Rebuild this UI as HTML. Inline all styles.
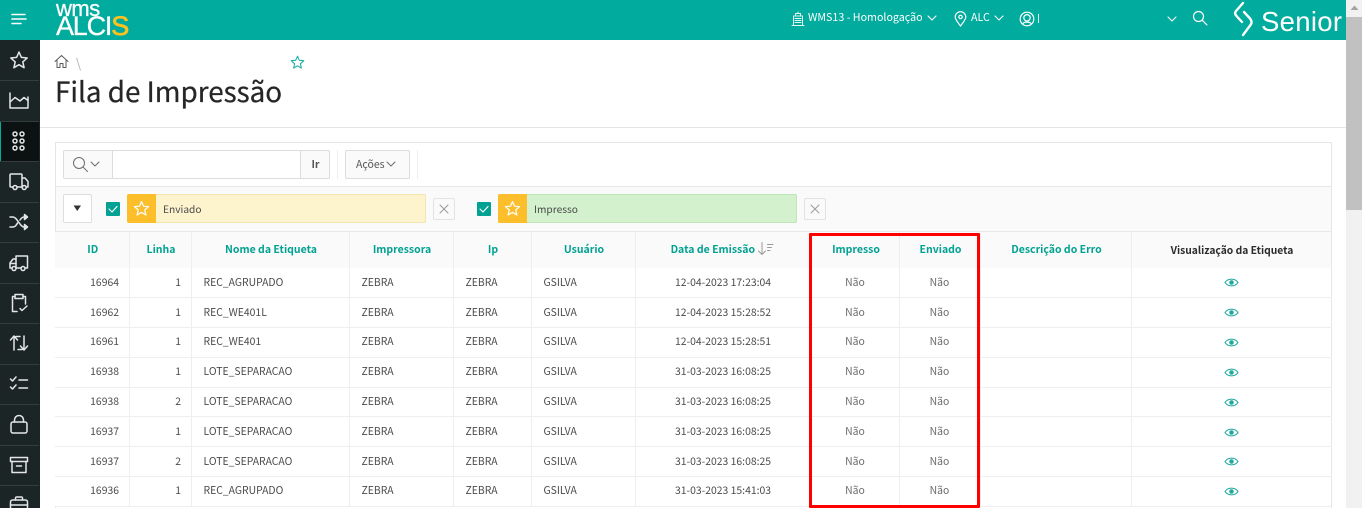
<!DOCTYPE html>
<html lang="pt"><head><meta charset="utf-8"><title>Fila de Impressão</title>
<style>
*{box-sizing:border-box}
html,body{margin:0;padding:0;width:1362px;height:508px;overflow:hidden;background:#fff}
body{position:relative;font-family:"Noto Sans CJK SC","Liberation Sans",sans-serif;font-size:11px;color:#404040}
.a{position:absolute}
svg{position:absolute;display:block;fill:none;stroke-linecap:round;stroke-linejoin:round}
#top{left:0;top:0;width:1346px;height:40px;background:#01ab9d;overflow:hidden}
#top span.t{position:absolute;color:#fff;font-size:10.7px;line-height:16px;top:10px;white-space:nowrap}
#side{left:0;top:40px;width:40px;height:468px;background:#1c2526}
.sep{position:absolute;left:0;width:39px;height:1px;background:#343c3d}
#side svg{stroke:#e3e6e6;stroke-width:1.5}
#sb{left:1346px;top:0;width:16px;height:508px;background:#f1f1f1}
#panel{left:55px;top:142px;width:1277px;height:380px;border:1px solid #e6e6e6;background:#fff}
table{position:absolute;left:55px;top:232px;border-collapse:collapse;table-layout:fixed;width:1276px}
th,td{padding:0 11px;border-right:1px solid #eeeeee;border-bottom:1px solid #eeeeee;white-space:nowrap;overflow:hidden}
th:last-child,td:last-child{border-right:1px solid #e6e6e6}
th{height:36px;background:#fafafa;color:#01a193;font-size:10.5px;font-weight:700;text-align:center;border-bottom:0;line-height:14px;padding:0 10px 0 12px}
td{height:29.8px;font-size:10.4px;line-height:14px;color:#4a4a4a;background:#fff;padding:0 11px 2px 12px}
td.r{text-align:right;padding-right:9.500px}
td.c{text-align:center;padding:0 11px 2px 11px}
td.n{text-align:center;color:#6a6a6a;padding:0 11px 2px 11px}
td svg{position:static;display:inline-block;vertical-align:middle}
</style></head><body>

<div class="a" id="top">
  <svg style="left:11px;top:13px" width="16" height="12" stroke="#fff" stroke-width="1.6"><path d="M1 1.500H14M1 6H15M1 10.500H10"/></svg>
  <span class="a" style="left:56px;top:0;color:#fff;font:400 22px/18px 'Liberation Sans',sans-serif;letter-spacing:-.5px;-webkit-text-stroke:.3px #fff">wms</span>
  <span class="a" style="left:56px;top:12px;color:#fff;font:400 27px/28px 'Liberation Sans',sans-serif;letter-spacing:-1.200px;-webkit-text-stroke:.3px #fff">ALCI<span style="color:#fcc11e;-webkit-text-stroke:.7px #fcc11e">S</span></span>

  <svg style="left:791px;top:11px" width="14" height="15" stroke="#e4f6f4" stroke-width="1"><path d="M1 14.500H13M2.500 14V5H11.500V14M4.500 5V2.500H9.500V5M7 1V2.500M4 7.500H10M4 9.500H10M4 11.500H10"/></svg>
  <span class="t" style="left:808px">WMS13 - Homologação</span>
  <svg style="left:927px;top:15px" width="10" height="7" stroke="#fff" stroke-width="1.100"><path d="M1 1L5 5L9 1"/></svg>
  <svg style="left:954px;top:11px" width="13" height="16" stroke="#fff" stroke-width="1.200"><path d="M6.500 15C3.500 11 1.200 8.500 1.200 6A5.300 5.300 0 0 1 11.800 6C11.800 8.500 9.500 11 6.500 15Z"/><circle cx="6.500" cy="6" r="1.700"/></svg>
  <span class="t" style="left:971px">ALC</span>
  <svg style="left:994px;top:15px" width="10" height="7" stroke="#fff" stroke-width="1.100"><path d="M1 1L5 5L9 1"/></svg>
  <svg style="left:1019px;top:11px" width="16" height="16" stroke="#fff" stroke-width="1.200"><circle cx="8" cy="8" r="6.800"/><circle cx="8" cy="6.800" r="3.200"/><path d="M3.500 13C5 10.500 11 10.500 12.500 13"/></svg>
  <div class="a" style="left:1038px;top:14px;width:1px;height:9px;background:#d8f3f0"></div>
  <svg style="left:1167px;top:16px" width="10" height="7" stroke="#fff" stroke-width="1.100"><path d="M1 1L5 5L9 1"/></svg>
  <svg style="left:1192px;top:10px" width="16" height="16" stroke="#fff" stroke-width="1.200"><circle cx="6.500" cy="6.500" r="5"/><path d="M10.200 10.200L15 15"/></svg>
  <svg style="left:1233px;top:1px" width="22" height="37" stroke="#fff" stroke-width="2.400"><path d="M10 2L3 10C1.500 12 2 13.500 3.500 15L9 21"/><path d="M11 11L17 17.500C19 20 19 22 17.500 24L10 34"/></svg>
  <span class="a" style="left:1261px;top:5px;color:#fff;font:400 27.500px/34px 'Liberation Sans',sans-serif;letter-spacing:.3px">Senior</span>
</div>

<div class="a" id="side">
  <div class="a" style="left:0;top:81px;width:39px;height:40px;background:#0c1212"></div>
  <div class="a" style="left:0;top:81px;width:1px;height:40px;background:#01ab9d"></div>
  <div class="sep" style="top:40px"></div><div class="sep" style="top:81px"></div><div class="sep" style="top:121px"></div><div class="sep" style="top:162px"></div><div class="sep" style="top:202px"></div><div class="sep" style="top:243px"></div><div class="sep" style="top:283px"></div><div class="sep" style="top:324px"></div><div class="sep" style="top:364px"></div><div class="sep" style="top:405px"></div><div class="sep" style="top:445px"></div>
  <svg style="left:9px;top:10px" width="20" height="20"><path d="M10 2L12.400 7.400L18.200 8L13.800 11.900L15.100 17.700L10 14.700L4.900 17.700L6.200 11.900L1.800 8L7.600 7.400Z"/></svg>
  <svg style="left:9px;top:52px" width="20" height="18"><path d="M1 1V16H19V5"/><path d="M1 10L6 5.500L11 9L15 5.500L19 8.500"/></svg>
  <svg style="left:11px;top:91px" width="16" height="20" stroke-width="1.300"><circle cx="4" cy="3" r="2"/><circle cx="11" cy="3" r="2"/><circle cx="4" cy="10" r="2"/><circle cx="11" cy="10" r="2"/><circle cx="4" cy="17" r="2"/><circle cx="11" cy="17" r="2"/></svg>
  <svg style="left:9px;top:133px" width="20" height="18"><path d="M4 14H2C1.400 14 1 13.600 1 13V2C1 1.400 1.400 1 2 1H12C12.600 1 13 1.400 13 2V14H8"/><path d="M13 5H16L19 8.500V14H17"/><path d="M13 14H13.500"/><circle cx="6" cy="14.500" r="2"/><circle cx="15.200" cy="14.500" r="2"/></svg>
  <svg style="left:9px;top:173px" width="20" height="18"><path d="M1 4H4C8 4 11 14 15 14H18M1 14H4C6 14 7.500 12 8.500 10M11 7C12 5.500 13.300 4 15 4H18"/><path d="M15.500 1.500L18.500 4L15.500 6.500Z"/><path d="M15.500 11.500L18.500 14L15.500 16.500Z"/></svg>
  <svg style="left:9px;top:214px" width="20" height="18"><path d="M16 14H18.500V2H7V5H4L1 9V14H3"/><path d="M7 5V14H12"/><path d="M1.500 9.500H7"/><circle cx="5" cy="14.500" r="2"/><circle cx="14" cy="14.500" r="2"/></svg>
  <svg style="left:11px;top:253px" width="18" height="20"><path d="M4 3.500H1.500V18.500H6"/><path d="M12 3.500H14.500V11"/><path d="M4 1.500H12V5.500H4Z"/><path d="M9 15.500L11 17.500L16 13"/></svg>
  <svg style="left:9px;top:294px" width="20" height="18"><path d="M5 16V5C5 3.500 6 2.500 7.500 2.500H11"/><path d="M1.500 6L5 2L8.500 6"/><path d="M15 2V13C15 14.500 14 15.500 12.500 15.500H9"/><path d="M11.500 12L15 16L18.500 12"/></svg>
  <svg style="left:9px;top:335px" width="20" height="18"><path d="M1.500 4L3.500 6L7 2M1.500 12L3.500 14L7 10M10 5H18.500M10 13H18.500"/></svg>
  <svg style="left:9px;top:374px" width="20" height="20"><rect x="2" y="8" width="16" height="11" rx="2"/><path d="M5.500 8V6A4.500 4.500 0 0 1 14.500 6V8"/></svg>
  <svg style="left:9px;top:416px" width="20" height="18"><rect x="1.500" y="1.500" width="17" height="4"/><path d="M3 5.500V16.500H17V5.500M7.500 10H12.500"/></svg>
  <svg style="left:9px;top:456px" width="20" height="14"><rect x="1.500" y="4" width="17" height="12" rx="2"/><path d="M6.500 4V2C6.500 1.500 7 1 7.500 1H12.500C13 1 13.500 1.500 13.500 2V4M1.500 9H18.500"/></svg>
</div>

<div class="a" id="sb">
  <div class="a" style="left:0;top:17px;width:16px;height:193px;background:#c1c1c1"></div>
  <svg style="left:4px;top:5px" width="9" height="6"><path d="M4.500 0.500L8.500 5H0.500Z" fill="#a3a3a3"/></svg>
</div>

<svg style="left:54px;top:54px" width="16" height="15" stroke="#5a5a5a" stroke-width="1"><path d="M1 7.500L7.500 1.500L14 7.500M3 6.500V13.500H6V9.500H9V13.500H12V6.500"/></svg>
<div class="a" style="left:76px;top:55px;color:#b0b0b0;font-size:13px;line-height:16px">\</div>
<svg style="left:290px;top:55px" width="15" height="15" stroke="#1fb1a5" stroke-width="1.100"><path d="M7.500 1.200L9.300 5.300L13.800 5.700L10.400 8.700L11.400 13.100L7.500 10.800L3.600 13.100L4.600 8.700L1.200 5.700L5.700 5.300Z"/></svg>
<div class="a" style="left:55px;top:73px;font-size:27.800px;line-height:36px;color:#262626;white-space:nowrap;-webkit-text-stroke:.25px #262626">Fila de Impressão</div>
<div class="a" style="left:40px;top:127px;width:1306px;height:1px;background:#e4e4e4"></div>

<div class="a" id="panel"></div>
<div class="a" style="left:56px;top:186px;width:1275px;height:46px;background:#fafafa;border-top:1px solid #e8e8e8;border-bottom:1px solid #e8e8e8"></div>

<div class="a" style="left:63px;top:150px;width:267px;height:29px;border:1px solid #dcdcdc;border-radius:2px;background:#fafafa"></div>
<div class="a" style="left:112px;top:150px;width:189px;height:29px;border:1px solid #dcdcdc;background:#fff"></div>
<svg style="left:72px;top:156px" width="17" height="17" stroke="#6c6c6c" stroke-width="1"><circle cx="7" cy="7" r="5.500"/><path d="M11 11L15.500 15.500"/></svg>
<svg style="left:90px;top:161px" width="10" height="6" stroke="#6c6c6c" stroke-width="1"><path d="M1 1L5 5L9 1"/></svg>
<div class="a" style="left:301px;top:157px;width:29px;text-align:center;font-size:10.500px;font-weight:700;line-height:15px;color:#555">Ir</div>
<div class="a" style="left:337px;top:150px;width:1px;height:29px;background:#eeeeee"></div>
<div class="a" style="left:345px;top:150px;width:65px;height:29px;border:1px solid #dcdcdc;border-radius:2px;background:#fafafa"></div>
<div class="a" style="left:356px;top:157px;font-size:10.500px;line-height:15px;color:#555">Ações</div>
<svg style="left:386px;top:161px" width="11" height="6" stroke="#6c6c6c" stroke-width="1"><path d="M1 1L5 5L9 1"/></svg>
<div class="a" style="left:417px;top:150px;width:1px;height:29px;background:#eeeeee"></div>

<div class="a" style="left:63px;top:194px;width:29px;height:29px;border:1px solid #dedede;border-radius:2px;background:#fff"></div>
<svg style="left:73px;top:205px" width="9" height="7"><path d="M0.500 0.500H8L4.250 6Z" fill="#333"/></svg>

<div class="a" style="left:106px;top:202px;width:14px;height:14px;background:#01a193;border-radius:1px"></div>
<svg style="left:106px;top:202px" width="14" height="14" stroke="#fff" stroke-width="1.200"><path d="M3 7L6 10L11 4.500"/></svg>
<div class="a" style="left:127px;top:194px;width:299px;height:29px;background:#fdf3cd;border:1px solid #f2e5b0;border-radius:2px"></div>
<div class="a" style="left:127px;top:194px;width:29px;height:29px;background:#fdbe2c;border-radius:2px 0 0 2px"></div>
<svg style="left:133px;top:200px" width="17" height="17" stroke="#fff" stroke-width="1.200"><path d="M8.500 1.500L10.500 6.200L15.600 6.600L11.700 10L12.900 15L8.500 12.400L4.100 15L5.300 10L1.400 6.600L6.500 6.200Z"/></svg>
<div class="a" style="left:163px;top:201px;font-size:10.200px;line-height:15px;color:#4a4a4a">Enviado</div>
<div class="a" style="left:433px;top:198px;width:22px;height:22px;border:1px solid #e2e2e2;border-radius:2px;background:#fafafa"></div>
<svg style="left:439px;top:204px" width="10" height="10" stroke="#9a9a9a" stroke-width="1"><path d="M1 1L9 9M9 1L1 9"/></svg>

<div class="a" style="left:477px;top:202px;width:14px;height:14px;background:#01a193;border-radius:1px"></div>
<svg style="left:477px;top:202px" width="14" height="14" stroke="#fff" stroke-width="1.200"><path d="M3 7L6 10L11 4.500"/></svg>
<div class="a" style="left:498px;top:194px;width:299px;height:29px;background:#d2f1cc;border:1px solid #bfe5b8;border-radius:2px"></div>
<div class="a" style="left:498px;top:194px;width:29px;height:29px;background:#fdbe2c;border-radius:2px 0 0 2px"></div>
<svg style="left:504px;top:200px" width="17" height="17" stroke="#fff" stroke-width="1.200"><path d="M8.500 1.500L10.500 6.200L15.600 6.600L11.700 10L12.900 15L8.500 12.400L4.100 15L5.300 10L1.400 6.600L6.500 6.200Z"/></svg>
<div class="a" style="left:534px;top:201px;font-size:10.200px;line-height:15px;color:#4a4a4a">Impresso</div>
<div class="a" style="left:804px;top:198px;width:22px;height:22px;border:1px solid #e2e2e2;border-radius:2px;background:#fafafa"></div>
<svg style="left:810px;top:204px" width="10" height="10" stroke="#9a9a9a" stroke-width="1"><path d="M1 1L9 9M9 1L1 9"/></svg>

<table>
<colgroup><col style="width:74px"><col style="width:62px"><col style="width:158px"><col style="width:104px"><col style="width:78px"><col style="width:104px"><col style="width:176px"><col style="width:88px"><col style="width:81px"><col style="width:151px"><col style="width:200px"></colgroup>
<tr><th>ID</th><th>Linha</th><th>Nome da Etiqueta</th><th>Impressora</th><th>Ip</th><th>Usuário</th><th>Data de Emissão <span style="display:inline-block;width:20px"></span></th><th>Impresso</th><th>Enviado</th><th>Descrição do Erro</th><th style="color:#2b2b2b;font-size:10.300px">Visualização da Etiqueta</th></tr>
<tr><td class="r">16964</td><td class="r">1</td><td>REC_AGRUPADO</td><td>ZEBRA</td><td>ZEBRA</td><td>GSILVA</td><td class="c">12-04-2023 17:23:04</td><td class="n">Não</td><td class="n">Não</td><td></td><td class="c"><svg width="15" height="11" stroke="#1fa99d" stroke-width="1.100"><path d="M1 5.500C4 1 11 1 14 5.500C11 10 4 10 1 5.500Z"/><circle cx="7.500" cy="5.500" r="1.700" fill="#1fa99d"/></svg></td></tr>
<tr><td class="r">16962</td><td class="r">1</td><td>REC_WE401L</td><td>ZEBRA</td><td>ZEBRA</td><td>GSILVA</td><td class="c">12-04-2023 15:28:52</td><td class="n">Não</td><td class="n">Não</td><td></td><td class="c"><svg width="15" height="11" stroke="#1fa99d" stroke-width="1.100"><path d="M1 5.500C4 1 11 1 14 5.500C11 10 4 10 1 5.500Z"/><circle cx="7.500" cy="5.500" r="1.700" fill="#1fa99d"/></svg></td></tr>
<tr><td class="r">16961</td><td class="r">1</td><td>REC_WE401</td><td>ZEBRA</td><td>ZEBRA</td><td>GSILVA</td><td class="c">12-04-2023 15:28:51</td><td class="n">Não</td><td class="n">Não</td><td></td><td class="c"><svg width="15" height="11" stroke="#1fa99d" stroke-width="1.100"><path d="M1 5.500C4 1 11 1 14 5.500C11 10 4 10 1 5.500Z"/><circle cx="7.500" cy="5.500" r="1.700" fill="#1fa99d"/></svg></td></tr>
<tr><td class="r">16938</td><td class="r">1</td><td>LOTE_SEPARACAO</td><td>ZEBRA</td><td>ZEBRA</td><td>GSILVA</td><td class="c">31-03-2023 16:08:25</td><td class="n">Não</td><td class="n">Não</td><td></td><td class="c"><svg width="15" height="11" stroke="#1fa99d" stroke-width="1.100"><path d="M1 5.500C4 1 11 1 14 5.500C11 10 4 10 1 5.500Z"/><circle cx="7.500" cy="5.500" r="1.700" fill="#1fa99d"/></svg></td></tr>
<tr><td class="r">16938</td><td class="r">2</td><td>LOTE_SEPARACAO</td><td>ZEBRA</td><td>ZEBRA</td><td>GSILVA</td><td class="c">31-03-2023 16:08:25</td><td class="n">Não</td><td class="n">Não</td><td></td><td class="c"><svg width="15" height="11" stroke="#1fa99d" stroke-width="1.100"><path d="M1 5.500C4 1 11 1 14 5.500C11 10 4 10 1 5.500Z"/><circle cx="7.500" cy="5.500" r="1.700" fill="#1fa99d"/></svg></td></tr>
<tr><td class="r">16937</td><td class="r">1</td><td>LOTE_SEPARACAO</td><td>ZEBRA</td><td>ZEBRA</td><td>GSILVA</td><td class="c">31-03-2023 16:08:25</td><td class="n">Não</td><td class="n">Não</td><td></td><td class="c"><svg width="15" height="11" stroke="#1fa99d" stroke-width="1.100"><path d="M1 5.500C4 1 11 1 14 5.500C11 10 4 10 1 5.500Z"/><circle cx="7.500" cy="5.500" r="1.700" fill="#1fa99d"/></svg></td></tr>
<tr><td class="r">16937</td><td class="r">2</td><td>LOTE_SEPARACAO</td><td>ZEBRA</td><td>ZEBRA</td><td>GSILVA</td><td class="c">31-03-2023 16:08:25</td><td class="n">Não</td><td class="n">Não</td><td></td><td class="c"><svg width="15" height="11" stroke="#1fa99d" stroke-width="1.100"><path d="M1 5.500C4 1 11 1 14 5.500C11 10 4 10 1 5.500Z"/><circle cx="7.500" cy="5.500" r="1.700" fill="#1fa99d"/></svg></td></tr>
<tr><td class="r">16936</td><td class="r">1</td><td>REC_AGRUPADO</td><td>ZEBRA</td><td>ZEBRA</td><td>GSILVA</td><td class="c">31-03-2023 15:41:03</td><td class="n">Não</td><td class="n">Não</td><td></td><td class="c"><svg width="15" height="11" stroke="#1fa99d" stroke-width="1.100"><path d="M1 5.500C4 1 11 1 14 5.500C11 10 4 10 1 5.500Z"/><circle cx="7.500" cy="5.500" r="1.700" fill="#1fa99d"/></svg></td></tr>
</table>

<svg style="left:757px;top:241px" width="18" height="16" stroke="#9a9a9a" stroke-width="1"><path d="M5 1.500V13.500M1.500 10L5 13.500L8.500 10M10.500 3.500H16M10.500 6.500H14.500M10.500 9.500H13"/></svg>

<div class="a" style="left:809px;top:233px;width:171px;height:275px;border:3px solid #f00;border-radius:1px"></div>
</body></html>
